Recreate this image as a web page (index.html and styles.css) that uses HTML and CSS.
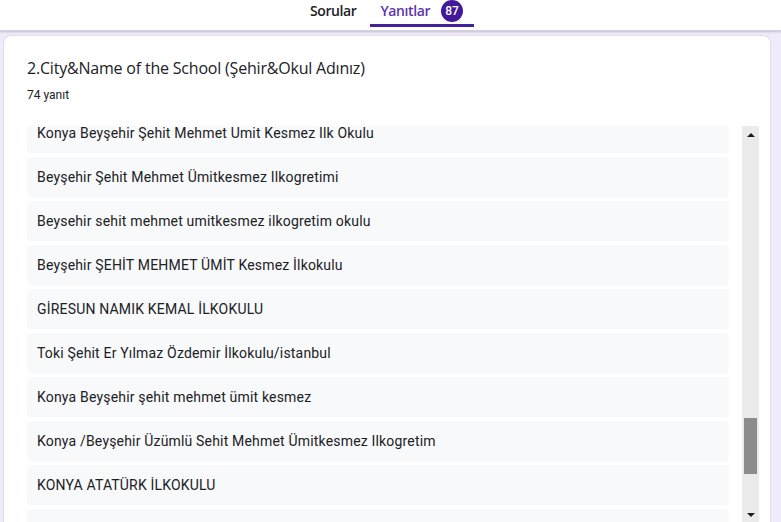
FILE: index.html
```html
<!DOCTYPE html>
<html lang="tr">
<head>
<meta charset="utf-8">
<title>Yanıtlar</title>
<link rel="stylesheet" href="styles.css">
</head>
<body>
<header class="topbar">
  <nav class="tabs">
    <div class="tab">Sorular</div>
    <div class="tab tab-active">Yanıtlar <span class="badge">87</span></div>
  </nav>
</header>
<main class="card">
  <h2 class="q-title">2.City&amp;Name of the School (Şehir&amp;Okul Adınız)</h2>
  <div class="q-count">74 yanıt</div>
  <div class="answers">
    <div class="answers-viewport">
      <ul class="answer-list">
        <li class="answer">Konya Beyşehir Şehit Mehmet Umit Kesmez Ilk Okulu</li>
        <li class="answer">Beyşehir Şehit Mehmet Ümitkesmez Ilkogretimi</li>
        <li class="answer">Beysehir sehit mehmet umitkesmez ilkogretim okulu</li>
        <li class="answer">Beyşehir ŞEHİT MEHMET ÜMİT Kesmez İlkokulu</li>
        <li class="answer">GİRESUN NAMIK KEMAL İLKOKULU</li>
        <li class="answer">Toki Şehit Er Yılmaz Özdemir İlkokulu/istanbul</li>
        <li class="answer">Konya Beyşehir şehit mehmet ümit kesmez</li>
        <li class="answer">Konya /Beyşehir Üzümlü Sehit Mehmet Ümitkesmez Ilkogretim</li>
        <li class="answer">KONYA ATATÜRK İLKOKULU</li>
        <li class="answer answer-empty"></li>
      </ul>
    </div>
    <div class="scrollbar">
      <div class="sb-arrow sb-up"></div>
      <div class="sb-thumb"></div>
      <div class="sb-fill"></div>
      <div class="sb-arrow sb-down"></div>
    </div>
  </div>
</main>
</body>
</html>
```
FILE: styles.css
```css
html, body {
  margin: 0;
  padding: 0;
  overflow: hidden;
  height: 522px;
}
body {
  background: #f0ebf8;
  font-family: Roboto, "Liberation Sans", Arial, sans-serif;
  color: #202124;
}
.topbar {
  background: #fff;
  height: 30px;
  border-bottom: 1px solid #d4d0dc;
  box-shadow: 0 1px 2px rgba(60, 50, 90, 0.25);
  display: flex;
  justify-content: flex-start;
}
.tabs {
  display: flex;
  margin-left: 296px;
  height: 30px;
}
.tab {
  font-family: "Open Sans", Roboto, sans-serif;
  font-weight: 600;
  font-size: 14px;
  letter-spacing: -0.4px;
  padding: 0 14px;
  height: 27px;
  display: flex;
  align-items: center;
  gap: 11px;
  color: #202124;
  box-sizing: content-box;
  border-bottom: 3px solid transparent;
  margin-top: -3px;
}
.tab-active {
  color: #5b34b0;
  border-bottom-color: #46209c;
  padding: 0 11px 0 10px;
}
.badge {
  display: inline-flex;
  align-items: center;
  justify-content: center;
  width: 22px;
  height: 22px;
  border-radius: 50%;
  background: #43199c;
  color: #fff;
  font-family: Roboto, sans-serif;
  font-weight: 500;
  font-size: 12px;
  letter-spacing: 0;
}
.card {
  background: #fff;
  margin: 4px 10px 0 3px;
  border-radius: 8px 8px 0 0;
  border: 1px solid #e2dcea;
  border-bottom: none;
  padding: 21px 11px 0 23px;
  height: 500px;
}
.q-title {
  margin: 0;
  font-family: "Open Sans", Roboto, sans-serif;
  font-weight: 400;
  font-size: 16px;
  line-height: 22px;
  color: #202124;
  letter-spacing: -0.2px;
}
.q-count {
  margin-top: 8px;
  font-size: 12px;
  line-height: 16px;
  color: #202124;
}
.answers {
  margin-top: 23px;
  display: flex;
  height: 397px;
}
.answers-viewport {
  flex: 1;
  overflow: hidden;
  padding-right: 13px;
}
.answer-list {
  list-style: none;
  margin: -13px 0 0 0;
  padding: 0;
  display: flex;
  flex-direction: column;
  gap: 4px;
}
.answer {
  height: 40px;
  display: flex;
  align-items: center;
  padding-left: 10px;
  background: #f8f9fa;
  border-radius: 4px;
  font-size: 14px;
  letter-spacing: 0.18px;
  color: #202124;
  flex: none;
}
.scrollbar {
  width: 17px;
  background: #ebebeb;
  display: flex;
  flex-direction: column;
  align-items: center;
}
.sb-arrow {
  height: 17px;
  width: 17px;
  display: flex;
  align-items: center;
  justify-content: center;
  flex: none;
}
.sb-up::before {
  content: "";
  border-left: 4px solid transparent;
  border-right: 4px solid transparent;
  border-bottom: 4px solid #1e1e1e;
}
.sb-down::before {
  content: "";
  border-left: 4px solid transparent;
  border-right: 4px solid transparent;
  border-top: 4px solid #1e1e1e;
}
.sb-thumb {
  width: 13px;
  height: 56px;
  margin-top: 275px;
  background: #8c8c8c;
  flex: none;
}
.sb-fill {
  flex: 1;
}
```
